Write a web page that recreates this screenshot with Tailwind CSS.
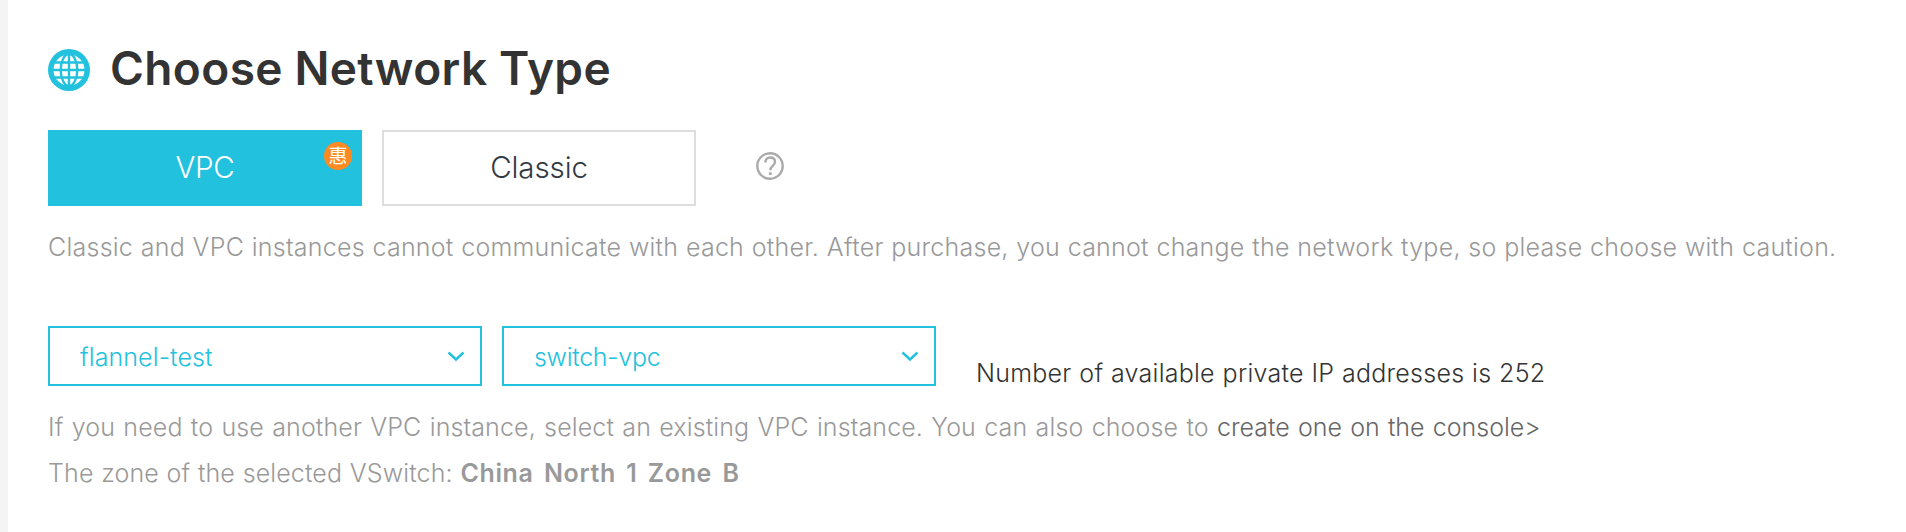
<!DOCTYPE html>
<html lang="en">
<head>
<meta charset="utf-8">
<title>Choose Network Type</title>
<script src="https://cdn.jsdelivr.net/npm/@tailwindcss/browser@4"></script>
</head>
<body class="bg-white">
<main class="h-[532px] overflow-hidden border-l-8 border-[#f4f4f4] pl-10 pt-[42px] font-['Inter','Noto_Sans_CJK_SC',sans-serif] font-light text-[25px] text-[#999] whitespace-nowrap">
  <header class="flex h-[52px] items-center">
    <svg class="mt-[3px] h-[42px] w-[42px] shrink-0" viewBox="0 0 42 42" fill="none">
      <circle cx="21" cy="21" r="21" fill="#22c1de"/>
      <circle cx="21" cy="21" r="15.5" fill="#fff"/>
      <g stroke="#22c1de" stroke-width="2.4"><path d="M21 5v32M5 21h32M7 13.500h28M7 28.500h28"/><ellipse cx="21" cy="21" rx="8.300" ry="16"/></g>
    </svg>
    <h1 class="ml-5 text-[46px] font-semibold tracking-[0.4px] [word-spacing:-0.5px] text-[#333]">Choose Network Type</h1>
  </header>
  <div class="mt-9 flex h-[76px] items-center gap-5">
    <button class="relative flex h-[76px] w-[314px] items-center justify-center bg-[#22c1de] pb-[2px] text-[29.5px] tracking-[-0.3px] text-white">VPC
      <span class="absolute right-[10px] top-[12px] flex size-7 items-center justify-center rounded-full bg-[#ff8a22] text-[19px] font-normal leading-none tracking-normal">惠</span>
    </button>
    <button class="flex h-[76px] w-[314px] items-center justify-center border-2 border-[#ddd] pb-[2px] text-[29.5px] tracking-[-0.1px] text-[#333a42]">Classic</button>
    <svg class="ml-10 mb-[4px] size-7" viewBox="0 0 28 28" fill="none" stroke="#aaa" stroke-width="2.400"><circle cx="14" cy="14" r="12.700"/><path d="M9.300 10.500c0-3 2-5 4.900-5s4.800 1.700 4.800 4.400c0 3.900-4.700 4-4.700 8.300"/><path d="M14.300 20.300v2.700" stroke-width="2.800"/></svg>
  </div>
  <p class="mt-[21px] leading-10 tracking-[0.24px] [word-spacing:0.4px]">Classic and VPC instances cannot communicate with each other. After purchase, you cannot change the network type, so please choose with caution.</p>
  <div class="mt-[59px] flex h-[60px]">
    <div class="flex w-[434px] items-center justify-between border-2 border-[#22c1de] pl-[30px] pr-[15px] text-[#22c1de]"><span class="pt-[3px] tracking-[0.1px]">flannel-test</span>
      <svg class="h-3 w-[18px]" viewBox="0 0 18 12" fill="none" stroke="currentColor" stroke-width="2.400"><path d="M1.500 2.500 9 9.500l7.500-7"/></svg></div>
    <div class="ml-5 flex w-[434px] items-center justify-between border-2 border-[#22c1de] pl-[30px] pr-[15px] text-[#22c1de]"><span class="pt-[3px] tracking-[-0.3px]">switch-vpc</span>
      <svg class="h-3 w-[18px]" viewBox="0 0 18 12" fill="none" stroke="currentColor" stroke-width="2.400"><path d="M1.500 2.500 9 9.500l7.500-7"/></svg></div>
    <p class="ml-10 mt-[27px] leading-10 tracking-[0.25px] [word-spacing:0.5px] text-[#333]">Number of available private IP addresses is 252</p>
  </div>
  <p class="mt-[18px] leading-[46px] tracking-[0.12px] [word-spacing:1.15px]">If you need to use another VPC instance, select an existing VPC instance. You can also choose to <a class="tracking-normal text-[#666]">create one on the console&gt;</a></p>
  <p class="leading-[46px] tracking-[0.13px] [word-spacing:0.5px]">The zone of the selected VSwitch: <strong class="font-semibold tracking-[0.65px] [word-spacing:3.4px]">China North 1 Zone B</strong></p>
</main>
</body>
</html>
